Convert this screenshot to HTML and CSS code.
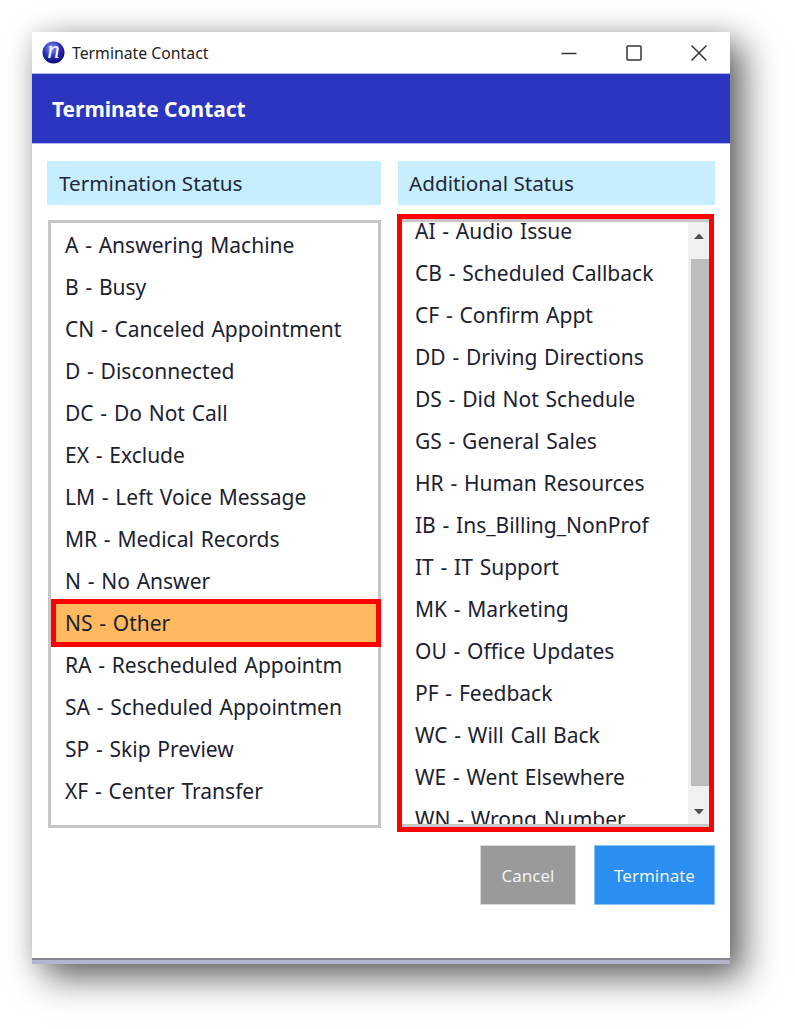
FILE: index.html
```html
<!DOCTYPE html>
<html lang="en">
<head>
<meta charset="utf-8">
<title>Terminate Contact</title>
<link rel="stylesheet" href="styles.css">
</head>
<body>
<div class="window">
  <div class="titlebar">
    <svg class="logo" width="23" height="23" viewBox="0 0 23 23">
      <defs>
        <radialGradient id="orb" cx="0.42" cy="0.3" r="0.75">
          <stop offset="0" stop-color="#8f9cf2"/>
          <stop offset="0.5" stop-color="#2a2fb8"/>
          <stop offset="1" stop-color="#06066a"/>
        </radialGradient>
      </defs>
      <circle cx="11.5" cy="11.5" r="11" fill="url(#orb)"/>
      <text x="11.5" y="16.5" text-anchor="middle" class="logo-n">n</text>
    </svg>
    <span class="title-text">Terminate Contact</span>
    <div class="controls">
      <svg width="16" height="16" viewBox="0 0 16 16"><path d="M0.5 8.5H15.5" class="ctl"/></svg>
      <svg width="16" height="16" viewBox="0 0 16 16"><rect x="1" y="1" width="14" height="14" rx="1" class="ctl"/></svg>
      <svg width="16" height="16" viewBox="0 0 16 16"><path d="M0.5 0.5L15.5 15.5M15.5 0.5L0.5 15.5" class="ctl"/></svg>
    </div>
  </div>
  <div class="banner">Terminate Contact</div>
  <div class="content">
    <div class="columns">
      <div class="col col-left">
        <div class="col-head">Termination Status</div>
        <ul class="list list-left">
          <li class="row">A - Answering Machine</li>
          <li class="row">B - Busy</li>
          <li class="row">CN - Canceled Appointment</li>
          <li class="row">D - Disconnected</li>
          <li class="row">DC - Do Not Call</li>
          <li class="row">EX - Exclude</li>
          <li class="row">LM - Left Voice Message</li>
          <li class="row">MR - Medical Records</li>
          <li class="row">N - No Answer</li>
          <li class="row row-selected">NS - Other</li>
          <li class="row">RA - Rescheduled Appointm</li>
          <li class="row">SA - Scheduled Appointmen</li>
          <li class="row">SP - Skip Preview</li>
          <li class="row">XF - Center Transfer</li>
        </ul>
      </div>
      <div class="col col-right">
        <div class="col-head head-right">Additional Status</div>
        <div class="red-frame">
          <div class="scroller">
            <ul class="list-right">
              <li class="row">AI - Audio Issue</li>
              <li class="row">CB - Scheduled Callback</li>
              <li class="row">CF - Confirm Appt</li>
              <li class="row">DD - Driving Directions</li>
              <li class="row">DS - Did Not Schedule</li>
              <li class="row">GS - General Sales</li>
              <li class="row">HR - Human Resources</li>
              <li class="row">IB - Ins_Billing_NonProf</li>
              <li class="row">IT - IT Support</li>
              <li class="row">MK - Marketing</li>
              <li class="row">OU - Office Updates</li>
              <li class="row">PF - Feedback</li>
              <li class="row">WC - Will Call Back</li>
              <li class="row">WE - Went Elsewhere</li>
              <li class="row">WN - Wrong Number</li>
            </ul>
            <div class="scrollbar">
              <svg class="arrow" width="21" height="26" viewBox="0 0 21 26"><path d="M6 17L11 11.5L16 17Z" fill="#505050"/></svg>
              <div class="thumb"></div>
              <svg class="arrow" width="21" height="26" viewBox="0 0 21 26"><path d="M6 11L11 16.5L16 11Z" fill="#505050"/></svg>
            </div>
          </div>
        </div>
      </div>
    </div>
    <div class="actions">
      <button class="btn btn-cancel">Cancel</button>
      <button class="btn btn-go">Terminate</button>
    </div>
  </div>
</div>
</body>
</html>
```
FILE: styles.css
```css
* { box-sizing: border-box; }
html, body { margin: 0; padding: 0; background: #fff; }
body { width: 795px; height: 1029px; overflow: hidden; padding: 32px 0 0 32px; font-family: "Noto Sans", "Open Sans", sans-serif; color: #1c2230; }
.window { width: 698px; height: 932px; background: #fff; display: flex; flex-direction: column; box-shadow: 13px 13px 34px rgba(0,0,0,.62), 0 0 20px rgba(0,0,0,.10); border-bottom: 4px solid #b4b4cc; }
.titlebar { height: 41px; display: flex; align-items: center; padding-left: 10px; background: #fff; }
.logo { flex: none; margin-top: -1px; }
.logo-n { font: italic 400 25px "Liberation Serif", serif; fill: #fff; }
.title-text { margin-left: 7px; font-size: 15.8px; color: #222; }
.controls { margin-left: auto; display: flex; gap: 49px; padding-right: 23px; }
.ctl { fill: none; stroke: #333; stroke-width: 1.5; }
.banner { height: 71px; background: #2c35c0; border-top: 1px solid #b5b8ea; border-bottom: 1px solid #b5b8ea; padding-left: 20px; display: flex; align-items: center; color: #fff; font-weight: 700; font-size: 20.9px; }
.content { flex: 1; padding: 17px 15px 0 15px; display: flex; flex-direction: column; box-shadow: inset 0 -2px 0 #868692; }
.columns { display: flex; gap: 17px; }
.col { display: flex; flex-direction: column; }
.col-left { width: 334px; }
.col-right { width: 317px; }
.col-head { height: 44px; background: #c7eeff; padding-left: 12px; display: flex; align-items: center; font-size: 20.7px; color: #1e2838; }
.head-right { padding-left: 11px; }
.list { list-style: none; margin: 15px 0 0 1px; padding: 1px 0 0; width: 333px; height: 608px; border: 3px solid #c6c6c6; background: #fff; }
.row { height: 42px; display: flex; align-items: center; padding-left: 14px; font-size: 21px; word-spacing: 1.3px; white-space: pre; }
.row-selected { height: 48px; margin: -3px -3px -3px 0; border: 5px solid #f00; padding-left: 9px; background: #ffb95e; }
.red-frame { margin: 9px 0 0 -1px; width: 317px; height: 618px; border: 5px solid #f00; }
.scroller { height: 100%; display: flex; border-top: 3px solid #c6c6c6; border-bottom: 3px solid #c6c6c6; overflow: hidden; }
.list-right { list-style: none; margin: -12px 0 0 0; padding: 0; flex: 1; }
.list-right .row { padding-left: 13px; }
.scrollbar { flex: none; width: 21px; height: 100%; background: #f0f0f0; display: flex; flex-direction: column; align-items: flex-end; }
.arrow { flex: none; }
.thumb { flex: 1; width: 18px; background: #bdbdbd; margin: 11px 0 12px; }
.actions { display: flex; justify-content: flex-end; gap: 18px; margin-top: 13px; }
.btn { height: 60px; border: 1px solid #d8d8d8; font: 17px "Noto Sans", "Open Sans", sans-serif; color: #eef2f8; padding: 0; }
.btn-cancel { width: 96px; background: #999a99; }
.btn-go { width: 121px; background: #2a8ff0; border-color: #8cc4f6; }
```
